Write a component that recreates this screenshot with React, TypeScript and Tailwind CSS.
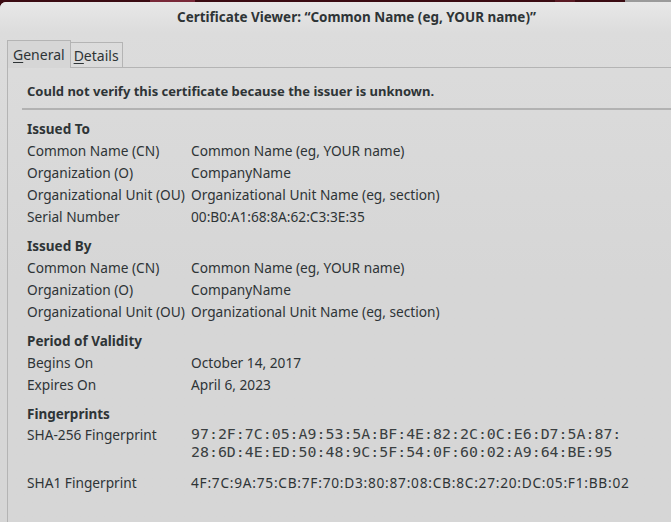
import React from "react";

const Row = ({ label, value }: { label: string; value: React.ReactNode }) => (
  <div className="flex h-[22px] items-center">
    <div className="w-[164px] shrink-0">{label}</div>
    <div>{value}</div>
  </div>
);

const Heading = ({ children }: { children: React.ReactNode }) => (
  <div className="flex h-[22px] items-center font-bold text-[13.5px]">{children}</div>
);

export default function App() {
  return (
    <div className="w-[671px] h-[522px] bg-[#3b0b12] overflow-hidden relative font-['Noto_Sans',sans-serif] text-[13.7px] text-[#2e3436]">
      <div className="absolute top-0 left-[150px] w-[45px] h-[2px] bg-[#7a2a3a]" />
      <div className="absolute top-0 left-[555px] w-[20px] h-[2px] bg-[#5a1a24]" />
      <div className="absolute top-0 left-[625px] w-[46px] h-[2px] bg-[#9a9a9a]" />
      <div className="absolute top-[2px] left-0 right-0 bottom-0 rounded-tl-[6px] bg-[#d6d6d6] flex flex-col">
        <div className="h-[31px] bg-gradient-to-b from-[#e8e8e8] to-[#dcdcdc] rounded-tl-[6px] flex items-center justify-center pl-[42px]">
          <span className="font-bold text-[13.45px] text-[#2e3436]">Certificate Viewer: “Common Name (eg, YOUR name)”</span>
        </div>
        <div className="flex flex-col flex-1 bg-gradient-to-b from-[#dcdcdc] to-[#d6d6d6] via-[#d6d6d6]">
          <div className="flex items-end pl-[7px] h-[34px]">
            <div className="h-[28px] px-[5px] border border-b-0 border-[#b4b4b4] flex items-center text-[14px] bg-[#d6d6d6] relative top-[1px]">
              <span><span className="underline underline-offset-2">G</span>eneral</span>
            </div>
            <div className="h-[25px] px-[3px] border border-l-0 border-b-0 border-[#b4b4b4] flex items-center text-[14px]">
              <span><span className="underline underline-offset-2">D</span>etails</span>
            </div>
          </div>
          <div className="flex-1 ml-[7px] border-t border-l border-[#b4b4b4] flex flex-col">
            <div className="pl-[19px] pt-[14px] h-[40px] font-bold text-[13px]">Could not verify this certificate because the issuer is unknown.</div>
            <div className="ml-[14px] h-[2px] bg-[#b2b2b2]" />
            <div className="pl-[19px] pt-[8px] flex flex-col">
              <Heading>Issued To</Heading>
              <Row label="Common Name (CN)" value="Common Name (eg, YOUR name)" />
              <Row label="Organization (O)" value="CompanyName" />
              <Row label="Organizational Unit (OU)" value="Organizational Unit Name (eg, section)" />
              <Row label="Serial Number" value="00:B0:A1:68:8A:62:C3:3E:35" />
              <div className="h-[7px]" />
              <Heading>Issued By</Heading>
              <Row label="Common Name (CN)" value="Common Name (eg, YOUR name)" />
              <Row label="Organization (O)" value="CompanyName" />
              <Row label="Organizational Unit (OU)" value="Organizational Unit Name (eg, section)" />
              <div className="h-[7px]" />
              <Heading>Period of Validity</Heading>
              <Row label="Begins On" value="October 14, 2017" />
              <Row label="Expires On" value="April 6, 2023" />
              <div className="h-[7px]" />
              <Heading>Fingerprints</Heading>
              <div className="flex h-[41px] pt-[1px]">
                <div className="w-[164px] shrink-0 leading-[18px]">SHA-256 Fingerprint</div>
                <div className="font-['DejaVu_Sans_Mono',monospace] text-[14.9px] leading-[17.5px] text-[#3a3f41]">
                  <div>97:2F:7C:05:A9:53:5A:BF:4E:82:2C:0C:E6:D7:5A:87:</div>
                  <div>28:6D:4E:ED:50:48:9C:5F:54:0F:60:02:A9:64:BE:95</div>
                </div>
              </div>
              <div className="flex h-[22px] items-center mt-[6px]">
                <div className="w-[164px] shrink-0">SHA1 Fingerprint</div>
                <div className="tracking-[0.75px]">4F:7C:9A:75:CB:7F:70:D3:80:87:08:CB:8C:27:20:DC:05:F1:BB:02</div>
              </div>
            </div>
          </div>
        </div>
      </div>
    </div>
  );
}
